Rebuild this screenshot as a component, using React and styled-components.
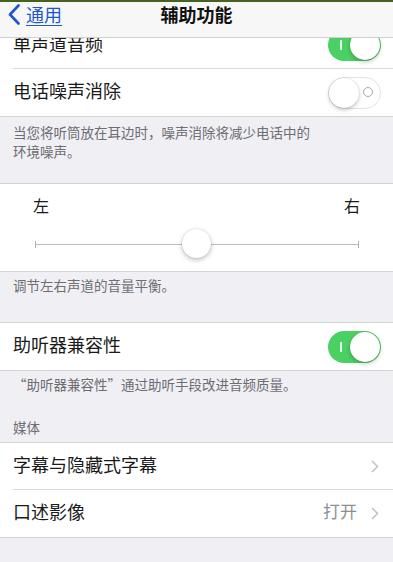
import styled, { createGlobalStyle } from "styled-components";

const GlobalStyle = createGlobalStyle`
    html, body {
        margin: 0;
        padding: 0;
        background: #efeff4;
        height: 562px;
        overflow: hidden;
        font-family: "Noto Sans CJK SC", "Noto Sans", sans-serif;
        -webkit-font-smoothing: antialiased;
    }
`;

const Page = styled.div`
    width: 393px;
    height: 562px;
    display: flex;
    flex-direction: column;
    overflow: hidden;
`;

const TopStrip = styled.div`
    height: 2px;
    background: #45621f;
    flex-shrink: 0;
`;

const NavBar = styled.div`
    height: 36px;
    box-sizing: border-box;
    padding-top: 0;
    flex-shrink: 0;
    background: #f7f7f8;
    border-bottom: 1px solid #cfcfd3;
    display: grid;
    grid-template-columns: 1fr auto 1fr;
    align-items: start;
    line-height: 24px;
    position: relative;
    z-index: 2;
`;

const Back = styled.div`
    display: flex;
    align-items: center;
    gap: 6px;
    padding-left: 8px;
    color: #1d56cf;
    font-size: 18px;
    span {
        text-decoration: underline;
        text-underline-offset: 3px;
        text-decoration-thickness: 1px;
    }
`;

const Title = styled.div`
    font-size: 18px;
    font-weight: 700;
    color: #111;
`;

const Scroll = styled.div`
    flex: 1;
    overflow: hidden;
`;

const Content = styled.div`
    margin-top: -17px;
`;

const Group = styled.div`
    background: #fff;
    border-top: ${p => (p.$noTop ? "none" : "1px solid #d3d3d6")};
    border-bottom: 1px solid #d3d3d6;
`;

const Row = styled.div`
    height: ${p => p.$h || 47}px;
    display: flex;
    align-items: center;
    justify-content: space-between;
    padding: 0 12px 0 13px;
    position: relative;
    &:not(:last-child)::after {
        content: "";
        position: absolute;
        left: 13px;
        right: 0;
        bottom: 0;
        height: 1px;
        background: #d9d9dc;
    }
`;

const Label = styled.div`
    font-size: 18px;
    line-height: 24px;
    margin-bottom: 5px;
    color: #1a1a1a;
`;

const Detail = styled.div`
    display: flex;
    align-items: center;
    gap: 14px;
    font-size: 17px;
    line-height: 24px;
    color: #8e8e93;
    padding-right: 2px;
    span {
        margin-bottom: 5px;
    }
`;

const Footer = styled.div`
    padding: ${p => p.$pad || "6px 13px 0"};
    height: ${p => p.$h}px;
    box-sizing: border-box;
    font-size: 13.5px;
    line-height: 19px;
    color: #6d6d72;
`;

const SectionHead = styled.div`
    font-size: 13.5px;
    color: #6d6d72;
    padding: 0 13px;
    line-height: 19px;
`;

const SwitchTrack = styled.div`
    width: 53px;
    height: 32px;
    border-radius: 16px;
    box-sizing: border-box;
    position: relative;
    background: ${p => (p.$on ? "#4bd063" : "#fff")};
    border: ${p => (p.$on ? "none" : "1.5px solid #e3e3e6")};
`;

const Knob = styled.div`
    position: absolute;
    top: ${p => (p.$on ? 1 : 0)}px;
    ${p => (p.$on ? "right: 1px;" : "left: 0;")}
    width: 30px;
    height: 30px;
    border-radius: 50%;
    background: #fff;
    box-shadow: 0 2px 4px rgba(0, 0, 0, 0.22), 0 0 0 0.5px rgba(0, 0, 0, 0.08);
`;

const OnMark = styled.div`
    position: absolute;
    left: 12px;
    top: 11px;
    width: 1.5px;
    height: 10px;
    background: rgba(255, 255, 255, 0.85);
`;

const OffMark = styled.div`
    position: absolute;
    right: 7px;
    top: 9px;
    width: 8px;
    height: 8px;
    border-radius: 50%;
    border: 1.5px solid #a9a9ad;
`;

const Switch = ({ on }) => (
    <SwitchTrack $on={on}>
        {on ? <OnMark /> : <OffMark />}
        <Knob $on={on} />
    </SwitchTrack>
);

const SliderCell = styled.div`
    height: 87px;
    padding: 0 33px;
    display: flex;
    flex-direction: column;
`;

const Ends = styled.div`
    display: flex;
    justify-content: space-between;
    font-size: 16px;
    color: #1a1a1a;
    margin-top: 10px;
    line-height: 22px;
`;

const Track = styled.div`
    margin: 28px 0 0 2px;
    width: 324px;
    height: 1px;
    background: #bdbdc0;
    position: relative;
    &::before, &::after {
        content: "";
        position: absolute;
        top: -3px;
        width: 1px;
        height: 7px;
        background: #b0b0b3;
    }
    &::before { left: 0; }
    &::after { right: 0; }
`;

const Thumb = styled.div`
    position: absolute;
    left: 147px;
    top: -15px;
    width: 29px;
    height: 29px;
    border-radius: 50%;
    background: #fff;
    box-shadow: 0 2px 5px rgba(0, 0, 0, 0.25), 0 0 0 0.5px rgba(0, 0, 0, 0.1);
`;

const Spacer = styled.div`
    height: ${p => p.$h}px;
`;

const Chevron = () => (
    <svg width="8" height="13" viewBox="0 0 8 13">
        <path d="M1 1l5.5 5.5L1 12" fill="none" stroke="#c4c4c8" strokeWidth="1.6" />
    </svg>
);

const BackArrow = () => (
    <svg width="12" height="21" viewBox="0 0 12 21">
        <path d="M10.5 1.5L2 10.5l8.5 9" fill="none" stroke="#1d56cf" strokeWidth="2.6" strokeLinecap="round" strokeLinejoin="round" />
    </svg>
);

export default function App() {
    return (
        <Page>
            <GlobalStyle />
            <TopStrip />
            <NavBar>
                <Back>
                    <BackArrow />
                    <span>通用</span>
                </Back>
                <Title>辅助功能</Title>
                <div />
            </NavBar>
            <Scroll>
                <Content>
                    <Group $noTop>
                        <Row $h={48}>
                            <Label>单声道音频</Label>
                            <Switch on />
                        </Row>
                        <Row>
                            <Label>电话噪声消除</Label>
                            <Switch on={false} />
                        </Row>
                    </Group>
                    <Footer $h={66}>
                        当您将听筒放在耳边时，噪声消除将减少电话中的<br />
                        环境噪声。
                    </Footer>
                    <Group>
                        <SliderCell>
                            <Ends>
                                <span>左</span>
                                <span>右</span>
                            </Ends>
                            <Track>
                                <Thumb />
                            </Track>
                        </SliderCell>
                    </Group>
                    <Footer $h={50} $pad="4px 13px 0">
                        调节左右声道的音量平衡。
                    </Footer>
                    <Group>
                        <Row $h={47}>
                            <Label>助听器兼容性</Label>
                            <Switch on />
                        </Row>
                    </Group>
                    <Footer $h={47} $pad="4px 13px 0">
                        “助听器兼容性”通过助听手段改进音频质量。
                    </Footer>
                    <SectionHead>媒体</SectionHead>
                    <Spacer $h={5} />
                    <Group>
                        <Row>
                            <Label>字幕与隐藏式字幕</Label>
                            <Detail><Chevron /></Detail>
                        </Row>
                        <Row $h={47}>
                            <Label>口述影像</Label>
                            <Detail>
                                <span>打开</span>
                                <Chevron />
                            </Detail>
                        </Row>
                    </Group>
                </Content>
            </Scroll>
        </Page>
    );
}
